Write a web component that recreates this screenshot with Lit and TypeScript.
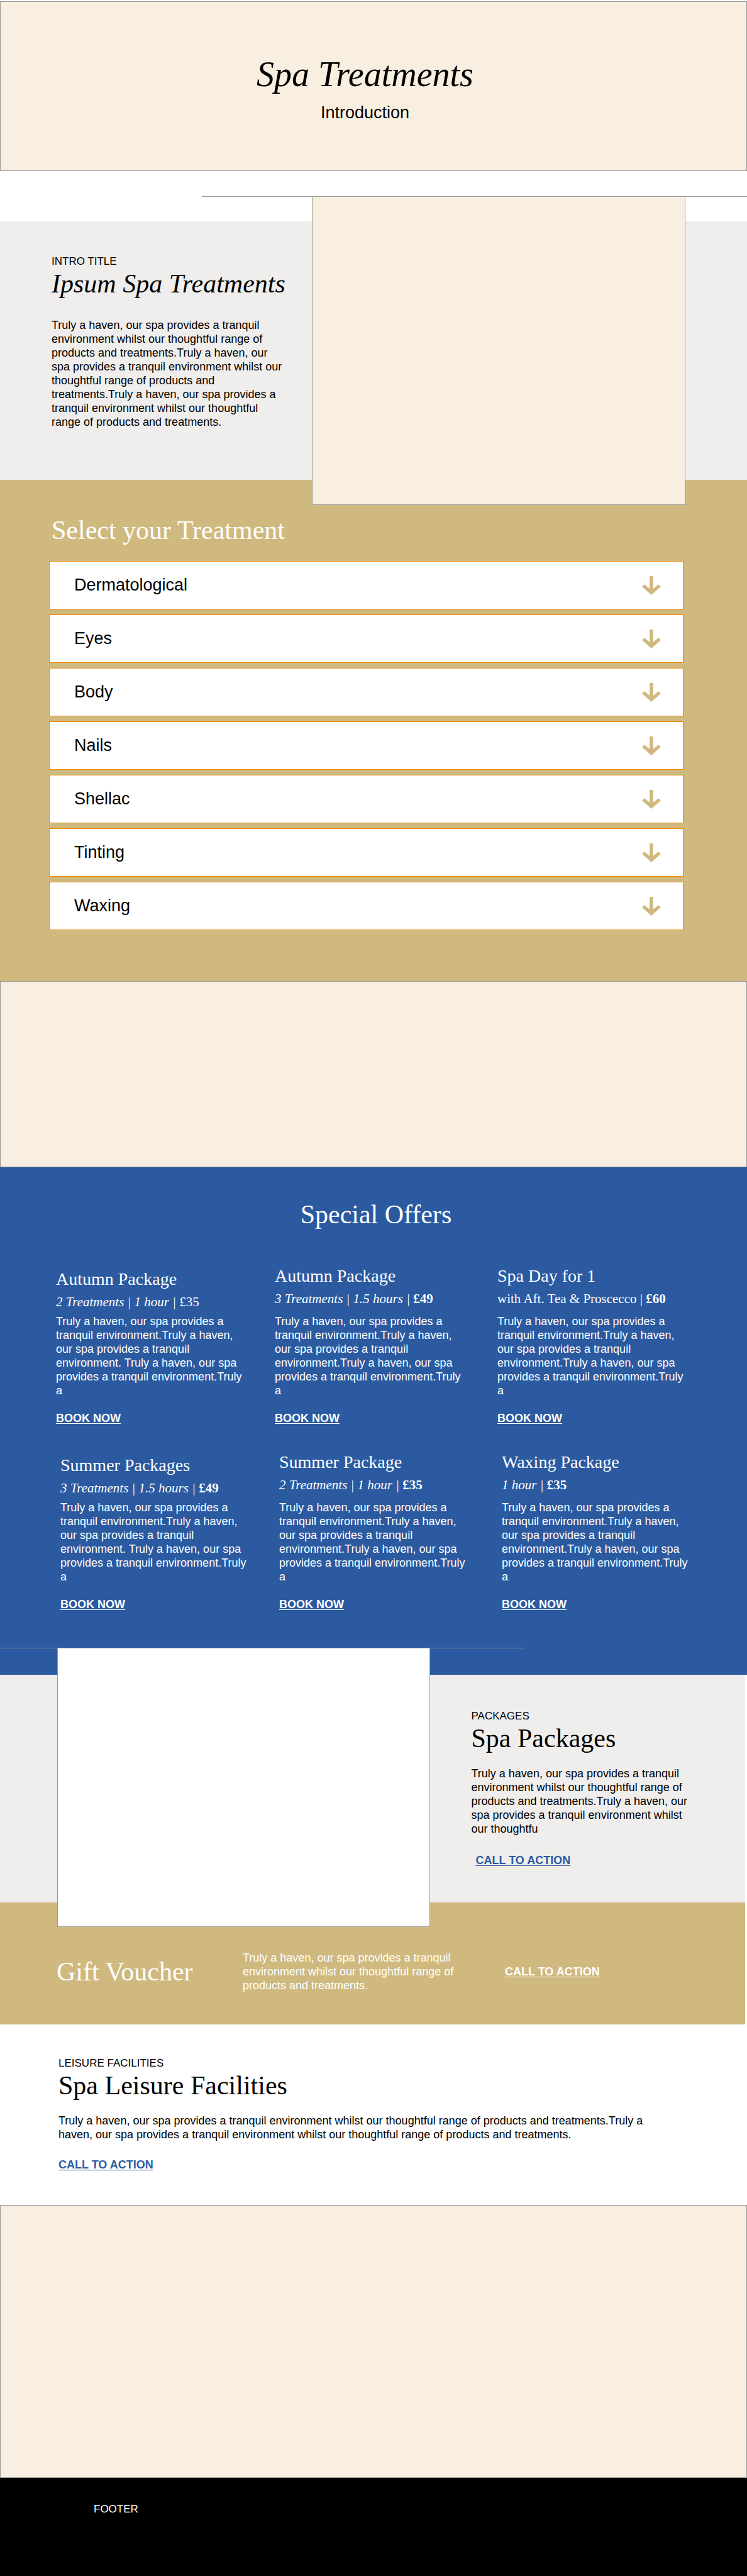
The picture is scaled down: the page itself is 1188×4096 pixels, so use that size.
import { LitElement, html, css, svg } from "lit";
import { customElement, property, state } from "lit/decorators.js";

interface Offer {
  title: string;
  detail: string;
  plain?: boolean;
  price: string;
  strong: boolean;
  text: string;
}

const spaced =
  "Truly a haven, our spa provides a\ntranquil environment.Truly a haven,\nour spa provides a tranquil\nenvironment. Truly a haven, our spa\nprovides a tranquil environment.Truly\na";
const joined = spaced.replace("environment. Truly", "environment.Truly");

const offerRows: Offer[][] = [
  [
    { title: "Autumn Package", detail: "2 Treatments | 1 hour | ", price: "£35", strong: false, text: spaced },
    { title: "Autumn Package", detail: "3 Treatments | 1.5 hours | ", price: "£49", strong: true, text: joined },
    { title: "Spa Day for 1", detail: "with Aft. Tea & Proscecco | ", plain: true, price: "£60", strong: true, text: joined },
  ],
  [
    { title: "Summer Packages", detail: "3 Treatments | 1.5 hours | ", price: "£49", strong: true, text: spaced },
    { title: "Summer Package", detail: "2 Treatments | 1 hour | ", price: "£35", strong: true, text: joined },
    { title: "Waxing Package", detail: "1 hour | ", price: "£35", strong: true, text: joined },
  ],
];

const treatments = ["Dermatological", "Eyes", "Body", "Nails", "Shellac", "Tinting", "Waxing"];

const arrow = svg`<path d="M20.9 0h9.8v34.6L45.2 23l6.8 6.2L25.9 52 0 29.2 6.6 23 20.9 34.6z"/>`;

@customElement("treatment-row")
export class TreatmentRow extends LitElement {
  @property() label = "";
  @state() private open = false;

  static styles = css`
    :host {
      display: block;
    }
    .row {
      display: flex;
      align-items: center;
      justify-content: space-between;
      box-sizing: border-box;
      width: 100%;
      min-height: 77px;
      margin: 0;
      padding: 0 35px 0 39px;
      border: 1px solid #f08a00;
      border-radius: 0;
      background: #fff;
      color: #000;
      font: 27px/32px "Liberation Sans", Arial, sans-serif;
      text-align: left;
      cursor: pointer;
    }
    .label {
      padding-bottom: 2px;
    }
    .icon {
      width: 30px;
      height: 30px;
      fill: #d0b97f;
    }
  `;

  render() {
    return html`
      <button class="row" type="button" aria-expanded=${this.open ? "true" : "false"} @click=${() => (this.open = !this.open)}>
        <span class="label">${this.label}</span>
        <svg class="icon" viewBox="0 0 52 52" aria-hidden="true">${arrow}</svg>
      </button>
    `;
  }
}

@customElement("app-root")
export class AppRoot extends LitElement {
  static styles = css`
    :host {
      display: block;
      padding-top: 2px;
      background: #fff;
      color: #000;
      font: 18px/22px "Liberation Sans", Arial, sans-serif;
    }
    h1,
    h2,
    h3,
    p {
      margin: 0;
      font-weight: 400;
    }
    h1,
    h2,
    h3,
    .detail {
      font-family: "Liberation Serif", "Times New Roman", serif;
    }
    h2 {
      font-size: 42px;
      line-height: 48px;
    }
    .italic {
      font-style: italic;
    }
    .copy {
      white-space: pre-line;
    }
    .eyebrow {
      font-size: 17px;
    }
    .link {
      color: #2b5aa1;
      font-weight: 700;
      text-decoration: underline;
      text-decoration-thickness: 1px;
      text-underline-offset: 2px;
    }
    .link.light {
      color: #fff;
    }
    .rule {
      height: 1px;
      margin: 0;
      border: 0;
      background: #979797;
    }
    .panel {
      box-sizing: border-box;
      border: 1px solid #979797;
      background: #f9efe0;
    }

    .hero {
      min-height: 270px;
      padding: 83px 27px 60px 0;
      text-align: center;
    }
    .hero h1 {
      margin-bottom: 13px;
      font-size: 56px;
      line-height: 64px;
    }
    .hero p {
      font-size: 27px;
      line-height: 32px;
    }

    .intro-rule {
      width: 73%;
      margin: 40px 0 39px auto;
    }
    .intro {
      display: flex;
      background: #efeeec;
    }
    .intro-text {
      flex: 1;
      padding: 53px 0 40px 82px;
    }
    .intro-text h2 {
      margin-bottom: 31px;
    }
    .photo {
      position: relative;
      z-index: 1;
      flex: 0 0 50%;
      min-height: 491px;
      margin: -40px 98px -40px 0;
    }

    .treatments {
      padding: 56px 101px 81px 78px;
      background: #d0b97f;
    }
    .treatments h2 {
      margin: 0 0 25px 4px;
      color: #fff;
    }
    .list {
      display: grid;
      gap: 8px;
    }

    .band {
      min-height: 296px;
    }

    .offers {
      padding: 51px 0 42px;
      background: #2b5aa1;
      color: #fff;
    }
    .offers h2 {
      padding-left: 8px;
      text-align: center;
    }
    .offer-row {
      display: grid;
      grid-template-columns: 348fr 354fr 397fr;
      margin-top: 58px;
      padding-left: 89px;
    }
    .offer-row + .offer-row {
      grid-template-columns: 348fr 354fr 390fr;
      margin-top: 43px;
      padding-left: 96px;
    }
    .offer-head {
      display: flex;
      flex-direction: column;
      gap: 8px;
      min-height: 69px;
      margin-bottom: 8px;
    }
    .offer:first-child .offer-head {
      justify-content: flex-end;
    }
    .offer h3 {
      font-size: 28px;
      line-height: 32px;
    }
    .detail {
      font-size: 21px;
      line-height: 24px;
    }
    .offer .copy {
      margin-bottom: 22px;
    }
    .offers-rule {
      width: 70%;
      margin-top: 58px;
    }

    .packages {
      display: flex;
      margin-right: 3px;
      background: #efeeec;
    }
    .packages .photo {
      min-height: 444px;
      margin: -43px 66px -39px 91px;
      background: #fff;
    }
    .packages-text {
      flex: 1;
      padding: 55px 0 40px;
    }
    .packages-text h2,
    .leisure h2 {
      margin-bottom: 21px;
    }
    .packages-text .link {
      display: inline-block;
      margin: 28px 0 0 7px;
    }

    .voucher {
      display: grid;
      grid-template-columns: 296fr 417fr 382fr;
      align-items: center;
      margin-right: 3px;
      padding: 77px 0 51px 90px;
      background: #d0b97f;
      color: #fff;
    }

    .leisure {
      padding: 51px 40px 53px 93px;
    }
    .leisure .link {
      display: inline-block;
      margin-top: 26px;
    }
    .wide {
      min-height: 434px;
    }

    .footer {
      min-height: 156px;
      box-sizing: border-box;
      padding: 39px 149px;
      background: #000;
      color: #fff;
    }
  `;

  private renderOffer(offer: Offer) {
    return html`
      <article class="offer">
        <header class="offer-head">
          <h3>${offer.title}</h3>
          <p class="detail">
            ${offer.plain ? html`<span>${offer.detail}</span>` : html`<em>${offer.detail}</em>`}${offer.strong
              ? html`<strong>${offer.price}</strong>`
              : html`<span>${offer.price}</span>`}
          </p>
        </header>
        <p class="copy">${offer.text}</p>
        <a class="link light" href="#book">BOOK NOW</a>
      </article>
    `;
  }

  render() {
    return html`
      <header class="hero panel">
        <h1 class="italic">Spa Treatments</h1>
        <p>Introduction</p>
      </header>

      <hr class="rule intro-rule" />
      <section class="intro">
        <div class="intro-text">
          <p class="eyebrow">INTRO TITLE</p>
          <h2 class="italic">Ipsum Spa Treatments</h2>
          <p class="copy">${"Truly a haven, our spa provides a tranquil\nenvironment whilst our thoughtful range of\nproducts and treatments.Truly a haven, our\nspa provides a tranquil environment whilst our\nthoughtful range of products and\ntreatments.Truly a haven, our spa provides a\ntranquil environment whilst our thoughtful\nrange of products and treatments."}</p>
        </div>
        <div class="panel photo"></div>
      </section>

      <section class="treatments">
        <h2>Select your Treatment</h2>
        <div class="list">
          ${treatments.map((name) => html`<treatment-row .label=${name}></treatment-row>`)}
        </div>
      </section>

      <div class="panel band"></div>

      <section class="offers">
        <h2>Special Offers</h2>
        ${offerRows.map((row) => html`<div class="offer-row">${row.map((offer) => this.renderOffer(offer))}</div>`)}
        <hr class="rule offers-rule" />
      </section>

      <section class="packages">
        <div class="panel photo"></div>
        <div class="packages-text">
          <p class="eyebrow">PACKAGES</p>
          <h2>Spa Packages</h2>
          <p class="copy">${"Truly a haven, our spa provides a tranquil\nenvironment whilst our thoughtful range of\nproducts and treatments.Truly a haven, our\nspa provides a tranquil environment whilst\nour thoughtfu"}</p>
          <a class="link" href="#packages">CALL TO ACTION</a>
        </div>
      </section>

      <section class="voucher">
        <h2>Gift Voucher</h2>
        <p class="copy">${"Truly a haven, our spa provides a tranquil\nenvironment whilst our thoughtful range of\nproducts and treatments."}</p>
        <div><a class="link light" href="#voucher">CALL TO ACTION</a></div>
      </section>

      <section class="leisure">
        <p class="eyebrow">LEISURE FACILITIES</p>
        <h2>Spa Leisure Facilities</h2>
        <p class="copy">${"Truly a haven, our spa provides a tranquil environment whilst our thoughtful range of products and treatments.Truly a\nhaven, our spa provides a tranquil environment whilst our thoughtful range of products and treatments."}</p>
        <a class="link" href="#leisure">CALL TO ACTION</a>
      </section>

      <div class="panel wide"></div>

      <footer class="footer"><p class="eyebrow">FOOTER</p></footer>
    `;
  }
}
